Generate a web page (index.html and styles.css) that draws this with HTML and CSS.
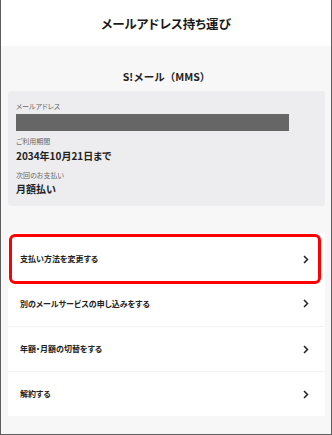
FILE: index.html
```html
<!DOCTYPE html>
<html lang="ja">
<head>
<meta charset="utf-8">
<link rel="stylesheet" href="styles.css">
</head>
<body>
<div class="frame">
  <header class="header"><h1 class="title">メールアドレス持ち運び</h1></header>
  <main class="main">
    <h2 class="service">S!メール（MMS）</h2>
    <section class="info">
      <div class="label">メールアドレス</div>
      <div class="masked"></div>
      <div class="label label-gap">ご利用期間</div>
      <div class="value">2034年10月21日まで</div>
      <div class="label label-gap2">次回のお支払い</div>
      <div class="value value-tight">月額払い</div>
    </section>
    <nav class="list">
      <a class="row row-hl"><span>支払い方法を変更する</span><svg class="chev" viewBox="0 0 6 9" width="6" height="9"><path d="M1 1l3.5 3.5L1 8" fill="none" stroke="#222" stroke-width="1.5"/></svg></a>
      <a class="row row-2"><span>別のメールサービスの申し込みをする</span><svg class="chev" viewBox="0 0 6 9" width="6" height="9"><path d="M1 1l3.5 3.5L1 8" fill="none" stroke="#222" stroke-width="1.5"/></svg></a>
      <a class="row"><span>年額・月額の切替をする</span><svg class="chev" viewBox="0 0 6 9" width="6" height="9"><path d="M1 1l3.5 3.5L1 8" fill="none" stroke="#222" stroke-width="1.5"/></svg></a>
      <a class="row row-last"><span>解約する</span><svg class="chev" viewBox="0 0 6 9" width="6" height="9"><path d="M1 1l3.5 3.5L1 8" fill="none" stroke="#222" stroke-width="1.5"/></svg></a>
    </nav>
  </main>
</div>
</body>
</html>
```
FILE: styles.css
```css
* { box-sizing: border-box; }
html, body { margin: 0; padding: 0; background: #fff; }
body {
  font-family: "Noto Sans CJK JP", "Noto Sans", sans-serif;
  font-feature-settings: "palt";
  color: #222;
}
.frame {
  width: 332px;
  height: 435px;
  border: 1px solid #5e5e5e;
  border-top: none;
  background: #f7f7f7;
  display: flex;
  flex-direction: column;
  overflow: hidden;
}
.header {
  height: 46px;
  background: #fff;
  display: flex;
  align-items: center;
  justify-content: center;
}
.title {
  margin: 0;
  font-size: 12.5px;
  font-weight: 700;
  line-height: 18px;
  padding-top: 1px;
  color: #1a1a1a;
}
.main {
  padding: 0 6px 0 7px;
}
.service {
  margin: 0;
  height: 45px;
  display: flex;
  align-items: flex-end;
  justify-content: center;
  padding-bottom: 7px;
  font-size: 10.5px;
  font-weight: 700;
  line-height: 14px;
  font-feature-settings: normal;
}
.info {
  background: #ededef;
  border-radius: 3px;
  padding: 10px 8px 9px 8px;
  height: 115px;
}
.label {
  font-size: 7px;
  line-height: 10px;
  color: #666;
}
.masked {
  margin-top: 3px;
  width: 273px;
  height: 17px;
  background: #666;
}
.label-gap { margin-top: 5px; }
.label-gap2 { margin-top: 7px; }
.value {
  margin-top: 3px;
  font-size: 10px;
  font-weight: 700;
  line-height: 14px;
}
.value-tight { margin-top: 2px; }
.list {
  margin-top: 27px;
  background: #fff;
  display: flex;
  flex-direction: column;
}
.row {
  display: flex;
  align-items: center;
  justify-content: space-between;
  height: 45px;
  padding: 0 16px 0 12px;
  font-size: 8px;
  font-weight: 700;
  line-height: 12px;
  color: #222;
  border-top: 1px solid #f3f3f3;
}
.row-hl {
  height: 50px;
  margin: 1px 4px 0 1px;
  border: 3px solid #ff0000;
  border-radius: 6px;
  padding: 0 9px 0 8px;
}
.row-2 { height: 42px; border-top: none; padding-bottom: 3px; }
.row-last { height: 45px; }
.chev { display: block; }
```
